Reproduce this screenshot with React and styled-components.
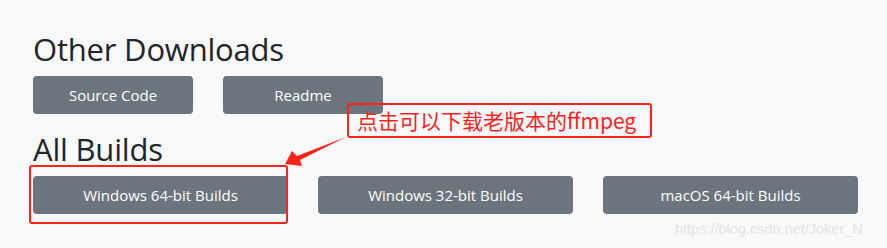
import React from "react";
import styled, { createGlobalStyle } from "styled-components";

const GlobalStyle = createGlobalStyle`
  html, body {
    margin: 0;
    padding: 0;
    background-color: #f8f9fa;
  }
`;

const Page = styled.main`
  position: relative;
  width: 887px;
  height: 248px;
  overflow: hidden;
  padding: 30px 0 0 33px;
  box-sizing: border-box;
  font-family: "Open Sans", "Noto Sans", sans-serif;
  color: #212529;
`;

const Heading = styled.h2`
  margin: ${({ first }) => (first ? "0" : "16px")} 0 8px;
  font-size: 31px;
  font-weight: 500;
  line-height: 38px;
  letter-spacing: -0.2px;
`;

const BtnRow = styled.div`
  display: flex;
  gap: 30px;
`;

const Btn = styled.button`
  width: ${({ wide }) => (wide ? "255px" : "160px")};
  height: 38px;
  border: none;
  border-radius: 4px;
  background-color: #6c757d;
  color: #fff;
  font-family: "Open Sans", "Noto Sans", sans-serif;
  font-size: 15px;
  padding: 0;
  cursor: pointer;
`;

const Note = styled.div`
  position: absolute;
  left: 347px;
  top: 103px;
  width: 305px;
  height: 35px;
  box-sizing: border-box;
  border: 2px solid #ff2418;
  border-radius: 3px;
  padding-left: 8px;
  display: flex;
  align-items: center;
  color: #ff1f1f;
  font-family: "Noto Sans CJK SC", sans-serif;
  font-size: 21px;
  line-height: 1;
`;

const Highlight = styled.div`
  position: absolute;
  left: 29px;
  top: 165px;
  width: 259px;
  height: 59px;
  box-sizing: border-box;
  border: 2px solid #ff2418;
  border-radius: 3px;
`;

const Arrow = styled.svg`
  position: absolute;
  left: 0;
  top: 0;
  pointer-events: none;
`;

const Watermark = styled.div`
  position: absolute;
  left: 675px;
  top: 221px;
  font-family: "Liberation Sans", Arial, sans-serif;
  font-size: 14.5px;
  color: #e3e4e5;
`;

export default function App() {
  return (
    <>
      <GlobalStyle />
      <Page>
        <Heading first>Other Downloads</Heading>
        <BtnRow>
          <Btn>Source Code</Btn>
          <Btn>Readme</Btn>
        </BtnRow>
        <Heading>All Builds</Heading>
        <BtnRow>
          <Btn wide>Windows 64-bit Builds</Btn>
          <Btn wide>Windows 32-bit Builds</Btn>
          <Btn wide>macOS 64-bit Builds</Btn>
        </BtnRow>

        <Note>点击可以下载老版本的ffmpeg</Note>
        <Highlight />
        <Arrow width="887" height="248" viewBox="0 0 887 248">
          <polygon
            points="285,164 292,151 297,156 346,137 300,160 302,166"
            fill="#ff2418"
          />
        </Arrow>
        <Watermark>https://blog.csdn.net/Joker_N</Watermark>
      </Page>
    </>
  );
}
